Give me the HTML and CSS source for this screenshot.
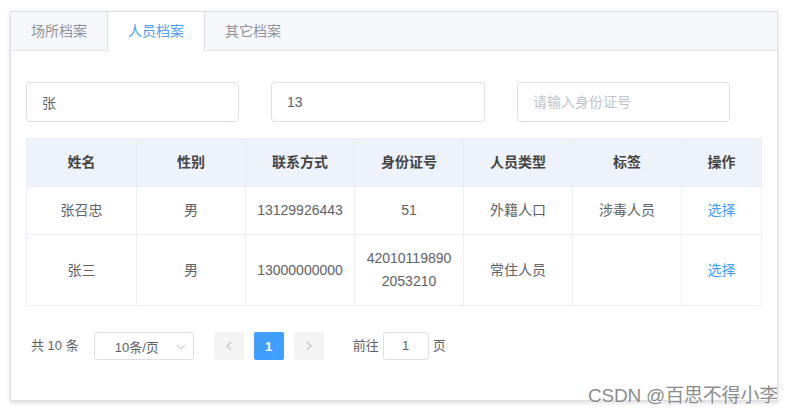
FILE: index.html
```html
<!DOCTYPE html>
<html lang="zh">
<head>
<meta charset="utf-8">
<title>人员档案</title>
<link rel="stylesheet" href="styles.css">
</head>
<body>
<div class="page">
  <div class="card">
    <div class="tabs-header">
      <div class="tab">场所档案</div>
      <div class="tab active">人员档案</div>
      <div class="tab">其它档案</div>
    </div>
    <div class="tabs-content">
      <div class="filters">
        <div class="field"><input class="input" type="text" value="张"></div>
        <div class="field"><input class="input" type="text" value="13"></div>
        <div class="field"><input class="input" type="text" placeholder="请输入身份证号"></div>
      </div>
      <table class="table">
        <colgroup>
          <col class="c-first"><col class="c-std"><col class="c-std"><col class="c-std"><col class="c-std"><col class="c-std"><col class="c-op">
        </colgroup>
        <thead>
          <tr><th>姓名</th><th>性别</th><th>联系方式</th><th>身份证号</th><th>人员类型</th><th>标签</th><th>操作</th></tr>
        </thead>
        <tbody>
          <tr><td>张召忠</td><td>男</td><td>13129926443</td><td>51</td><td>外籍人口</td><td>涉毒人员</td><td><a class="link">选择</a></td></tr>
          <tr><td>张三</td><td>男</td><td>13000000000</td><td>420101198902053210</td><td>常住人员</td><td></td><td><a class="link">选择</a></td></tr>
        </tbody>
      </table>
      <div class="pagination">
        <span class="total">共 10 条</span>
        <div class="sizes">
          <span>10条/页</span>
          <svg class="caret" width="10" height="6" viewBox="0 0 10 6"><path d="M1 1l4 4 4-4" fill="none" stroke="#c0c4cc" stroke-width="1"/></svg>
        </div>
        <button class="pbtn" type="button"><svg width="8" height="10" viewBox="0 0 8 10"><path d="M6 1L2 5l4 4" fill="none" stroke="#c0c4cc" stroke-width="1.3"/></svg></button>
        <button class="pbtn current" type="button">1</button>
        <button class="pbtn" type="button"><svg width="8" height="10" viewBox="0 0 8 10"><path d="M2 1l4 4-4 4" fill="none" stroke="#c0c4cc" stroke-width="1.3"/></svg></button>
        <span class="jump">前往<span class="jump-input">1</span>页</span>
      </div>
    </div>
  </div>
  <div class="watermark">CSDN @百思不得小李</div>
</div>
</body>
</html>
```
FILE: styles.css
```css
* { box-sizing: border-box; }
html, body { margin: 0; padding: 0; background: #fff; }
body {
  font-family: "Liberation Sans", "Noto Sans CJK SC", sans-serif;
  font-size: 14px;
  color: #606266;
}
.page {
  position: relative;
  width: 794px;
  height: 414px;
  padding: 11px 16px 0 10px;
}
.card {
  width: 768px;
  border: 1px solid #dcdfe6;
  background: #fff;
  box-shadow: 0 2px 4px 0 rgba(0,0,0,.12), 0 0 6px 0 rgba(0,0,0,.04);
}
.tabs-header {
  display: flex;
  height: 39px;
  background: #f5f7fa;
  border-bottom: 1px solid #e4e7ed;
}
.tab {
  height: 39px;
  line-height: 39px;
  padding: 0 20px;
  color: #909399;
  font-size: 14px;
  border-left: 1px solid transparent;
  border-right: 1px solid transparent;
  margin-left: -1px;
}
.tab:first-child { margin-left: 0; border-left: 0; }
.tab.active {
  background: #fff;
  color: #4a9ff5;
  border-left-color: #dcdfe6;
  border-right-color: #dcdfe6;
}
.tabs-content {
  padding: 31px 15px 40px 15px;
}
.filters {
  display: grid;
  grid-template-columns: 245px 246px 245px;
  margin-bottom: 16px;
}
.input {
  display: block;
  width: 213px;
  height: 40px;
  border: 1px solid #dcdfe6;
  border-radius: 4px;
  padding: 0 15px;
  font-family: inherit;
  font-size: 14px;
  color: #606266;
  outline: none;
  background: #fff;
}
.field:nth-child(2) .input { width: 214px; }
.input::placeholder { color: #c0c4cc; }
.table {
  width: 735px;
  border-collapse: collapse;
  table-layout: fixed;
  border: 1px solid #ebeef5;
}
.c-first { width: 110px; }
.c-std { width: 109px; }
.c-op { width: 80px; }
.table th, .table td {
  border: 1px solid #ebeef5;
  padding: 12px 10px;
  line-height: 23px;
  text-align: center;
  word-break: break-all;
  font-size: 14px;
}
.table th {
  background: #edf2fb;
  color: #444;
  font-weight: bold;
}
.table td { color: #606266; }
.link { color: #409eff; cursor: pointer; }
.pagination {
  display: flex;
  align-items: center;
  height: 28px;
  margin-top: 26px;
  padding-left: 5px;
  font-size: 13px;
  color: #606266;
}
.total { margin-right: 15px; line-height: 28px; }
.sizes {
  position: relative;
  width: 100px;
  height: 28px;
  border: 1px solid #dcdfe6;
  border-radius: 3px;
  display: flex;
  align-items: center;
  padding-left: 20px;
  margin-right: 20px;
}
.caret { position: absolute; right: 7px; top: 11px; }
.pbtn {
  width: 30px;
  height: 28px;
  margin-right: 10px;
  border: 0;
  border-radius: 2px;
  background: #f4f4f5;
  color: #606266;
  font-family: inherit;
  font-size: 13px;
  font-weight: bold;
  padding: 0;
  display: flex;
  align-items: center;
  justify-content: center;
}
.pbtn.current { background: #409eff; color: #fff; }
.pbtn:last-of-type { margin-right: 29px; }
.jump { display: flex; align-items: center; line-height: 28px; }
.jump-input {
  width: 46px;
  height: 28px;
  margin: 0 4px;
  border: 1px solid #dcdfe6;
  border-radius: 3px;
  text-align: center;
  line-height: 26px;
}
.watermark {
  position: absolute;
  left: 588px;
  top: 380px;
  font-size: 19px;
  letter-spacing: -0.2px;
  color: #8c8c8c;
  text-shadow: 0 0 1px #fff, 0 0 2px #fff;
  white-space: nowrap;
}
```
